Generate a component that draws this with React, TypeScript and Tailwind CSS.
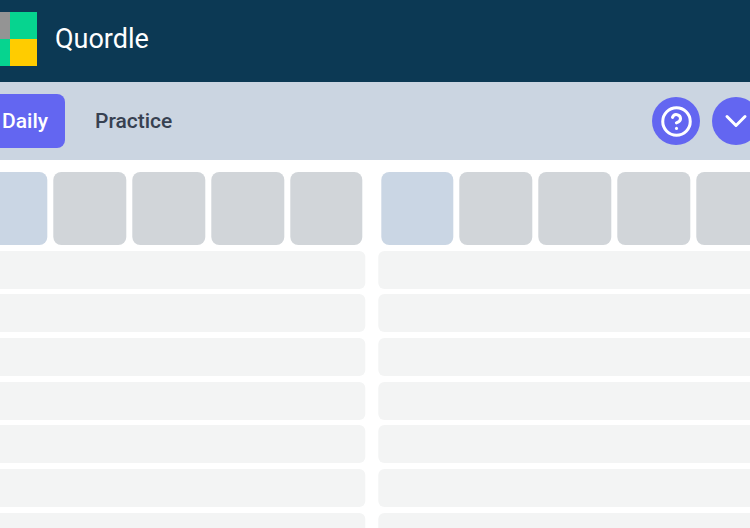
import { ChevronDown, CircleHelp } from 'lucide-react'

const rowIndexes = [0, 1, 2, 3, 4, 5, 6, 7, 8]
const cellIndexes = [1, 2, 3, 4]

function Board() {
  return (
    <div className="flex flex-col gap-[5.7px]">
      <div className="flex gap-[6px] px-[2.5px]">
        <div className="h-[73px] w-[72.8px] shrink-0 rounded-lg bg-[#cad6e4]" />
        {cellIndexes.map((cell) => (
          <div key={cell} className="h-[73px] w-[72.8px] shrink-0 rounded-lg bg-[#d1d5d9]" />
        ))}
      </div>
      {rowIndexes.map((row) => (
        <div key={row} className="h-[38px] rounded-md bg-[#f3f4f4]" />
      ))}
    </div>
  )
}

export default function App() {
  return (
    <div className="h-[528px] w-[750px] overflow-hidden bg-white font-['Roboto',sans-serif]">
      <header className="flex h-[82px] w-[800px] -translate-x-[17px] items-center gap-[18px] bg-[#0c3954] pb-[4px]">
        <div className="grid h-[54px] w-[54px] shrink-0 grid-cols-2 grid-rows-2">
          <div className="bg-[#949494]" />
          <div className="bg-[#06d48f]" />
          <div className="bg-[#06d48f]" />
          <div className="bg-[#ffcc00]" />
        </div>
        <h1 className="text-[27px] font-normal leading-none text-white">Quordle</h1>
      </header>

      <nav className="flex h-[78px] items-center justify-between bg-[#cbd5e1]">
        <div className="flex -translate-x-[17px] items-center gap-[12px]">
          <button className="h-[54px] rounded-lg bg-[#6366f1] pl-[19px] pr-[17px] pt-[2px] text-[21px] font-medium text-white">Daily</button>
          <button className="h-[54px] rounded-lg px-[18px] pt-[2px] text-[21px] font-medium text-[#374151]">Practice</button>
        </div>
        <div className="flex translate-x-[10px] items-center gap-[12px]">
          <button className="flex h-[48px] w-[48px] items-center justify-center rounded-full bg-[#6366f1] text-white">
            <CircleHelp size={33} strokeWidth={2.2} />
          </button>
          <button className="flex h-[48px] w-[48px] items-center justify-center rounded-full bg-[#6366f1] text-white">
            <ChevronDown size={36} strokeWidth={2} />
          </button>
        </div>
      </nav>

      <main className="grid w-[799px] -translate-x-[27.7px] grid-cols-2 gap-[13px] pt-[12px]">
        <Board />
        <Board />
      </main>
    </div>
  )
}
